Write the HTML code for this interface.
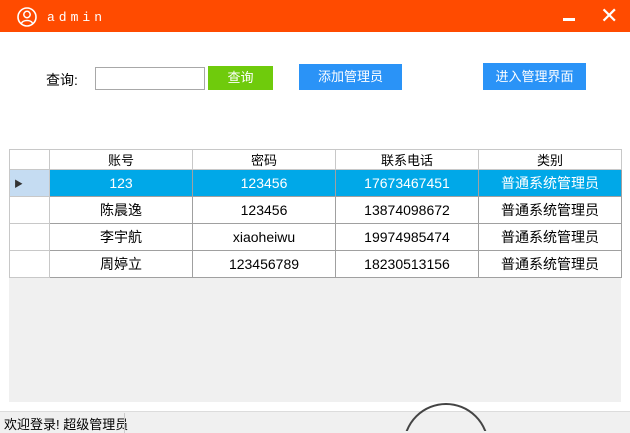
<!DOCTYPE html>
<html style="width:630px;height:433px;overflow:hidden"><head><meta charset="utf-8"><style>
body{margin:0;width:630px;height:433px;overflow:hidden;background:#fff;position:relative;font-family:"Liberation Sans","Noto Sans CJK SC",sans-serif;font-size:13px;color:#000}
.a{position:absolute}
.title{left:0;top:0;width:630px;height:32px;background:#ff4b00}
table{position:absolute;left:9px;top:149px;border-collapse:collapse;background:#fff}
td{border:1px solid #a0a0a0;text-align:center;height:26px;padding:0;font-size:14px}
tr.h td{height:18px;font-size:13px;border-color:#c8c8c8}
tr.s td{background:#00a8e8;color:#fff}
tr.s td.rh{background:#c5dcf2}
td.rh{border-color:#c8c8c8}
</style></head><body>
<div class="a title"></div>
<svg class="a" style="left:17px;top:7px" width="20" height="20" viewBox="0 0 20 20"><circle cx="10" cy="10" r="9" fill="none" stroke="#fff" stroke-width="1.6"/><circle cx="10" cy="7.5" r="3.2" fill="none" stroke="#fff" stroke-width="1.5"/><path d="M4.5 16.5C5.5 12.5 14.5 12.5 15.5 16.5" fill="none" stroke="#fff" stroke-width="1.5"/></svg>
<div class="a" style="left:47px;top:10px;color:#fff;font-family:'Liberation Mono',monospace;font-size:13px;letter-spacing:4px">admin</div>
<div class="a" style="left:563px;top:18px;width:12px;height:3px;background:#fff"></div>
<div class="a" style="left:600px;top:3px;color:#fff;font-size:22px">✕</div>
<div class="a" style="left:46px;top:70px;font-size:14px">查询:</div>
<div class="a" style="left:95px;top:67px;width:108px;height:21px;border:1px solid #a8a8a8;background:#fff"></div>
<div class="a" style="left:208px;top:66px;width:65px;height:24px;background:#6fcb0c;color:#fff;text-align:center;line-height:24px">查询</div>
<div class="a" style="left:299px;top:64px;width:103px;height:26px;background:#2a93f7;color:#fff;text-align:center;line-height:26px">添加管理员</div>
<div class="a" style="left:483px;top:63px;width:103px;height:27px;background:#2a93f7;color:#fff;text-align:center;line-height:27px">进入管理界面</div>
<div class="a" style="left:9px;top:149px;width:612px;height:253px;background:#f0f0f0"></div>
<table>
<tr class="h"><td class="rh" style="width:39px"></td><td style="width:142px">账号</td><td style="width:142px">密码</td><td style="width:142px">联系电话</td><td style="width:142px">类别</td></tr>
<tr class="s"><td class="rh" style="text-align:left;padding-left:4px;color:#333;font-size:9px">▶</td><td>123</td><td>123456</td><td>17673467451</td><td>普通系统管理员</td></tr>
<tr><td class="rh"></td><td>陈晨逸</td><td>123456</td><td>13874098672</td><td>普通系统管理员</td></tr>
<tr><td class="rh"></td><td>李宇航</td><td>xiaoheiwu</td><td>19974985474</td><td>普通系统管理员</td></tr>
<tr><td class="rh"></td><td>周婷立</td><td>123456789</td><td>18230513156</td><td>普通系统管理员</td></tr>
</table>
<div class="a" style="left:0;top:411px;width:630px;height:22px;background:#f0f0f0;border-top:1px solid #dcdcdc"></div>
<div class="a" style="left:4px;top:414px;font-size:13px">欢迎登录! 超级管理员</div>
<div class="a" style="left:124px;top:413px;width:1px;height:20px;background:#ccc"></div>
<div class="a" style="left:403px;top:403px;width:84px;height:28px;overflow:hidden"><div style="width:82px;height:82px;border:2px solid #444;border-radius:50%"></div></div>
</body></html>
